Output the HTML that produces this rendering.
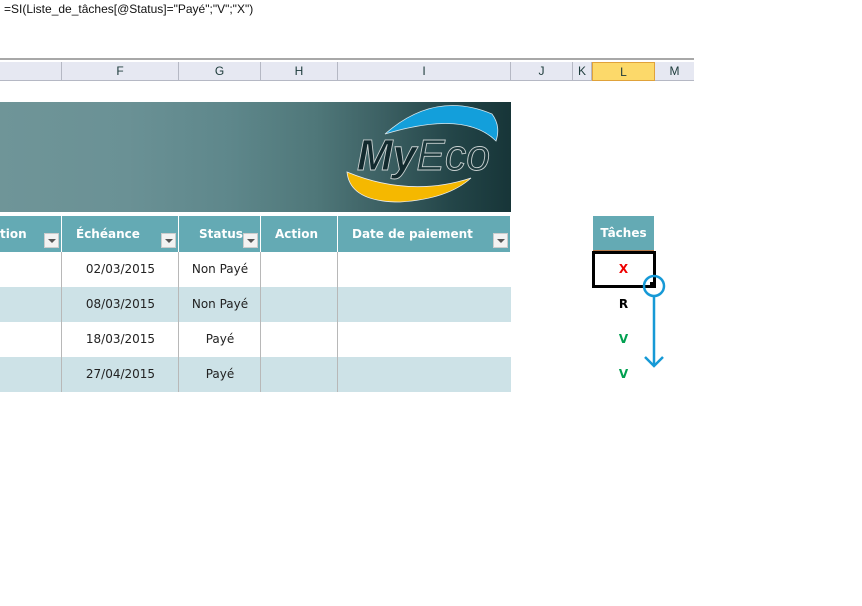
<!DOCTYPE html>
<html><head><meta charset="utf-8"><style>
*{margin:0;padding:0;box-sizing:border-box}
body{width:862px;height:606px;background:#fff;position:relative;overflow:hidden;font-family:"DejaVu Sans","Liberation Sans",sans-serif}
.a{position:absolute}
.fx{left:4px;top:2px;font-size:12px;color:#111;font-family:"Liberation Sans",sans-serif}
.colh{top:62px;height:19px;background:#e6e8f2;border-right:1px solid #b5b8c4;border-bottom:1px solid #b5b8c4;font-size:12px;color:#1c3a3a;text-align:center;line-height:19px;font-family:"Liberation Sans",sans-serif}
.th{top:216px;height:36px;background:#64aab4;color:#fff;font-weight:bold;font-size:12px;line-height:36px;padding-left:14px;border-right:1px solid #fff}
.dd{position:absolute;right:2px;top:17px;width:15px;height:15px;background:#f2f2f2;border:1px solid #ccc}
.dd:after{content:"";position:absolute;left:3px;top:5px;border-left:4px solid transparent;border-right:4px solid transparent;border-top:4px solid #555}
.row{left:0;width:511px;height:35px}
.c{font-size:12px;color:#222;text-align:center;line-height:35px}
.vl{width:1px;background:#b8b8b8;top:252px;height:140px}
</style></head><body>
<div class="a fx">=SI(Liste_de_tâches[@Status]="Payé";"V";"X")</div>
<div class="a" style="left:0;top:58px;width:694px;height:2px;background:#a8a8a8"></div>
<div class="a" style="left:0;top:60px;width:694px;height:2px;background:#fff"></div>
<div class="a colh" style="left:0;width:62px"></div>
<div class="a colh" style="left:62px;width:117px">F</div>
<div class="a colh" style="left:179px;width:82px">G</div>
<div class="a colh" style="left:261px;width:77px">H</div>
<div class="a colh" style="left:338px;width:173px">I</div>
<div class="a colh" style="left:511px;width:62px">J</div>
<div class="a colh" style="left:573px;width:19px">K</div>
<div class="a colh" style="left:592px;width:63px;background:#fcd96a;border:1px solid #e0a23a">L</div>
<div class="a colh" style="left:655px;width:39px;border-right:none">M</div>

<div class="a" style="left:0;top:102px;width:511px;height:110px;background:linear-gradient(90deg,#6f9598 0%,#6a9195 25%,#5e878b 45%,#4f7779 62%,#3c6063 75%,#244649 88%,#173538 100%)"></div>
<svg class="a" style="left:340px;top:104px" width="170" height="106" viewBox="0 0 170 106">
<path d="M45 30 Q95 -14 152 10 Q161 22 156 37 Q125 6 45 30Z" fill="#139fdb" stroke="#d8e8ee" stroke-width="0.8"/>
<path d="M7 68 Q10 98 60 98 Q108 95 131 74 Q70 94 7 68Z" fill="#f5b800" stroke="#eee" stroke-width="0.8"/>
<text x="17" y="66" textLength="133" lengthAdjust="spacingAndGlyphs" font-family="Liberation Sans,sans-serif" font-style="italic" font-size="44" stroke="#c8d0d0" stroke-width="0.9"><tspan font-weight="bold" fill="#122a2e">My</tspan><tspan fill="#1d3a3d">Eco</tspan></text>
</svg>

<div class="a th" style="left:0;width:62px;padding-left:0">tion<span class="dd"></span></div>
<div class="a th" style="left:62px;width:117px">Échéance<span class="dd"></span></div>
<div class="a th" style="left:179px;width:82px;padding-left:20px">Status<span class="dd"></span></div>
<div class="a th" style="left:261px;width:77px">Action</div>
<div class="a th" style="left:338px;width:173px">Date de paiement<span class="dd"></span></div>

<div class="a row" style="top:252px;background:#fff"></div>
<div class="a row" style="top:287px;background:#cde2e7"></div>
<div class="a row" style="top:322px;background:#fff"></div>
<div class="a row" style="top:357px;background:#cde2e7"></div>
<div class="a vl" style="left:61px"></div>
<div class="a vl" style="left:178px"></div>
<div class="a vl" style="left:260px"></div>
<div class="a vl" style="left:337px"></div>

<div class="a c" style="left:62px;top:252px;width:117px">02/03/2015</div>
<div class="a c" style="left:62px;top:287px;width:117px">08/03/2015</div>
<div class="a c" style="left:62px;top:322px;width:117px">18/03/2015</div>
<div class="a c" style="left:62px;top:357px;width:117px">27/04/2015</div>
<div class="a c" style="left:179px;top:252px;width:82px">Non Payé</div>
<div class="a c" style="left:179px;top:287px;width:82px">Non Payé</div>
<div class="a c" style="left:179px;top:322px;width:82px">Payé</div>
<div class="a c" style="left:179px;top:357px;width:82px">Payé</div>

<div class="a" style="left:593px;top:216px;width:61px;height:34px;background:#64aab4;color:#fff;font-weight:bold;font-size:12px;text-align:center;line-height:34px">Tâches</div>
<div class="a" style="left:593px;top:250px;width:61px;height:2px;background:#b87a4a"></div>
<div class="a" style="left:592px;top:251px;width:64px;height:37px;border:3px solid #000;background:#fff"></div>
<div class="a" style="left:593px;top:252px;width:61px;height:35px;text-align:center;line-height:35px;color:#e00;font-weight:bold;font-size:12px">X</div>
<div class="a" style="left:593px;top:287px;width:61px;height:35px;text-align:center;line-height:35px;color:#000;font-weight:bold;font-size:12px">R</div>
<div class="a" style="left:593px;top:322px;width:61px;height:35px;text-align:center;line-height:35px;color:#00a050;font-weight:bold;font-size:12px">V</div>
<div class="a" style="left:593px;top:357px;width:61px;height:35px;text-align:center;line-height:35px;color:#00a050;font-weight:bold;font-size:12px">V</div>
<svg class="a" style="left:640px;top:274px" width="30" height="100" viewBox="0 0 30 100">
<circle cx="14" cy="12" r="10" fill="none" stroke="#1699d6" stroke-width="2.5"/>
<rect x="10" y="8" width="5" height="5" fill="#000"/>
<line x1="14" y1="22" x2="14" y2="92" stroke="#1699d6" stroke-width="2.5"/>
<path d="M5 83 L14 92 L23 83" fill="none" stroke="#1699d6" stroke-width="2.5"/>
</svg>
</body></html>
